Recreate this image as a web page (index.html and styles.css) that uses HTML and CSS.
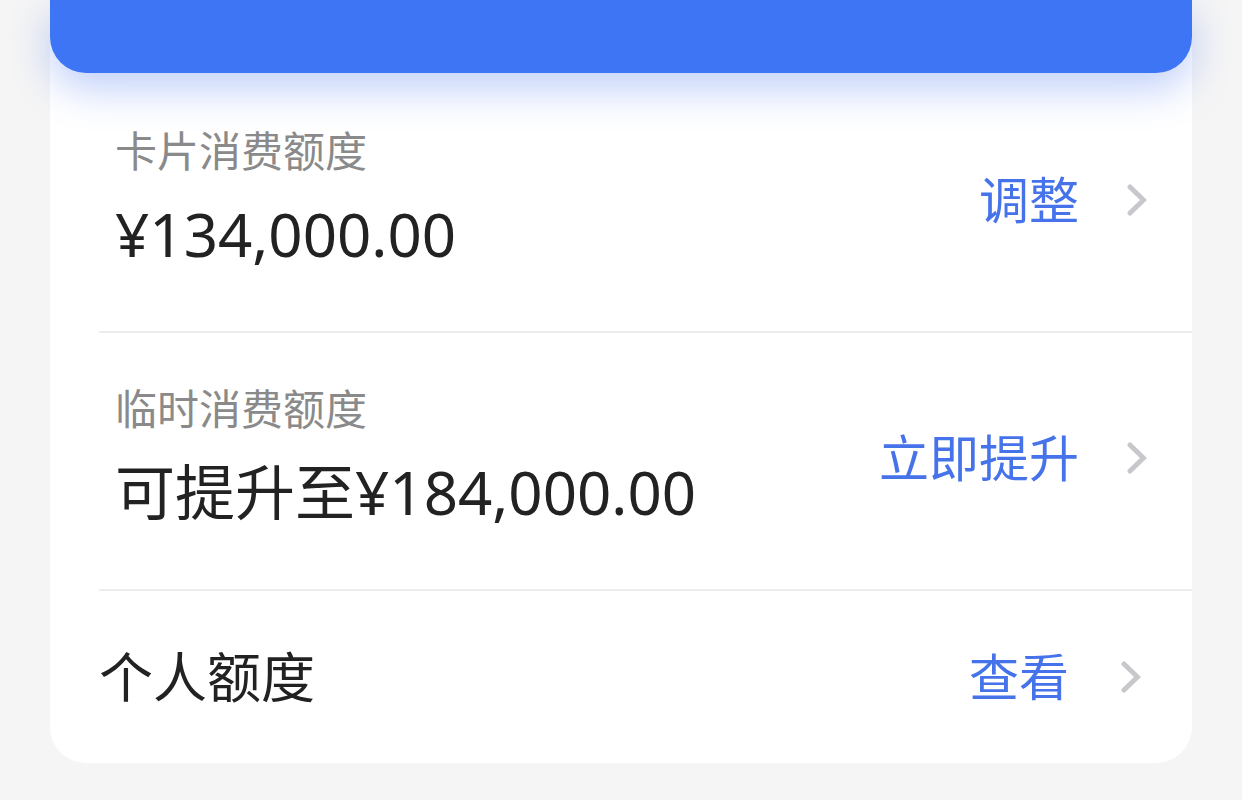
FILE: index.html
```html
<!DOCTYPE html>
<html>
	<head>
		<meta http-equiv="Content-Type" content="text/html; charset=utf-8" />
		<link rel="stylesheet" href="styles.css">
	</head>
	<body>
		<div class="Page">
			<div class="Card">
				<div class="CardHead"></div>
				<div class="CardBody">
					<div class="Row">
						<div class="RowText">
							<div class="RowLabel">卡片消费额度</div>
							<div class="RowValue">¥134,000.00</div>
						</div>
						<div class="RowAction">
							<span class="ActionText">调整</span>
							<svg class="Chevron" viewBox="0 0 20 32"><polyline points="3,3 16.5,16 3,29" /></svg>
						</div>
					</div>
					<div class="Row">
						<div class="RowText">
							<div class="RowLabel">临时消费额度</div>
							<div class="RowValue">可提升至¥184,000.00</div>
						</div>
						<div class="RowAction">
							<span class="ActionText">立即提升</span>
							<svg class="Chevron" viewBox="0 0 20 32"><polyline points="3,3 16.5,16 3,29" /></svg>
						</div>
					</div>
					<div class="Row RowSimple">
						<div class="RowTitle">个人额度</div>
						<div class="RowAction">
							<span class="ActionText">查看</span>
							<svg class="Chevron" viewBox="0 0 20 32"><polyline points="3,3 16.5,16 3,29" /></svg>
						</div>
					</div>
				</div>
			</div>
		</div>
	</body>
</html>
```

FILE: styles.css
```css
html, body		{ margin: 0 ; padding: 0 ; background: #f5f5f5 ; }
body			{ font-family: "Noto Sans", "Noto Sans CJK SC", sans-serif ; overflow: hidden ; }
.Page			{ padding: 0 50px ; height: 800px ; }
.Card			{ background: #ffffff ; border-radius: 0 0 36px 36px ; }
.CardHead		{ position: relative ; z-index: 1 ; height: 73px ; background: #3e75f5 ; border-radius: 0 0 36px 36px ; box-shadow: 0 16px 40px rgba(62, 110, 240, 0.32) ; }
.CardBody		{ padding: 2px 0 0 49px ; }
.Row			{ display: flex ; align-items: center ; justify-content: space-between ; padding: 47px 45px 57px 16px ; border-bottom: 2px solid #ededed ; }
.RowText		{ display: flex ; flex-direction: column ; gap: 14px ; }
.RowLabel		{ font-size: 42px ; line-height: 58px ; color: #8a8a8a ; }
.RowValue		{ font-size: 60px ; line-height: 80px ; color: #222222 ; }
.RowAction		{ display: flex ; align-items: center ; gap: 48px ; padding-top: 4px ; }
.ActionText		{ font-size: 50px ; line-height: 70px ; color: #4673ea ; }
.Chevron		{ width: 20px ; height: 32px ; display: block ; }
.Chevron polyline	{ fill: none ; stroke: #c8c8cc ; stroke-width: 5 ; stroke-linecap: round ; stroke-linejoin: miter ; }
.RowSimple		{ border-bottom: none ; padding: 0 51px 0 0 ; height: 172px ; }
.RowTitle		{ font-size: 54px ; line-height: 70px ; color: #222222 ; }
.RowSimple .RowAction	{ gap: 52px ; padding-top: 0 ; }
```
